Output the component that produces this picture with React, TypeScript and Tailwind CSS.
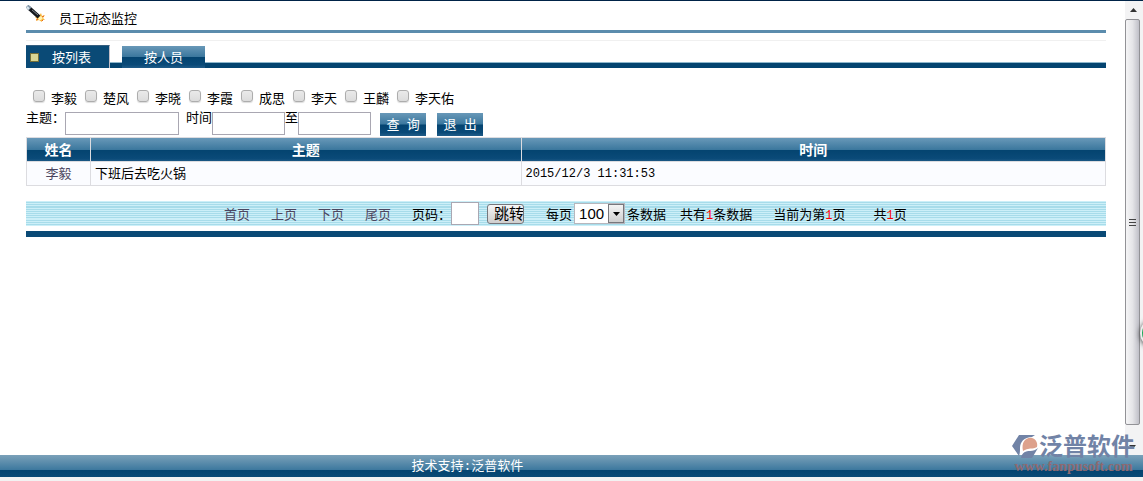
import type { ReactNode } from "react";

const people = ["李毅", "楚风", "李晓", "李霞", "成思", "李天", "王麟", "李天佑"];

const pageLinks = ["首页", "上页", "下页", "尾页"];

const rows = [{ name: "李毅", subject: "下班后去吃火锅", time: "2015/12/3 11:31:53" }];

const blueBar =
  "bg-[linear-gradient(180deg,#6898b8_0%,#3c789e_48%,#044470_52%,#0a4a78_85%,#205c88_100%)]";

function WandIcon() {
  return (
    <svg width="20" height="18" viewBox="0 0 20 18" aria-hidden="true">
      <path d="M9 12l4-1 2-3 1 3 3-1-2 3 2 2-3 0 0 2-3-2-3 1 1-2z" fill="#f9b63c" />
      <path d="M12 13l3-2 2 2-2 2-2 0z" fill="#fff3b0" />
      <path d="M16 12l2-1M10 15l2-1M16 15l1 1" stroke="#e8641f" strokeWidth="1" />
      <path d="M3 3l10 9" stroke="#15181d" strokeWidth="4" />
      <path d="M1 1l3 3" stroke="#8196a8" strokeWidth="4" />
      <path d="M1 2l2 2" stroke="#dbe7ef" strokeWidth="2" />
      <path d="M6 5l6 5" stroke="#7b828a" strokeWidth="1" />
    </svg>
  );
}

function FanpuLogo() {
  return (
    <svg width="27" height="26" viewBox="0 0 27 26" aria-hidden="true">
      <path d="M7 1h16l-3 2C12 3 8 8 8 14c0 3 0 5-1 8L0 12z" fill="#7183a6" />
      <path d="M11 17C9 8 14 3 20 4c4 1 6 5 5 9-3 2-6 1-9 2-2 0-3 1-5 2z" fill="#dda18c" />
      <path d="M9 24c1-6 5-7 9-7 3 0 6-1 8-3l-6 10z" fill="#7183a6" />
    </svg>
  );
}

function ActionButton({ children }: { children: ReactNode }) {
  return (
    <button type="button" className={`h-[23px] w-[46px] whitespace-pre text-center text-white ${blueBar}`}>
      {children}
    </button>
  );
}

function Count({ value }: { value: number }) {
  return (
    <span className="font-['Liberation_Mono',monospace] text-[12px] leading-none text-[#ff0000]">{value}</span>
  );
}

function Tabs() {
  return (
    <nav className="mt-1 flex h-[23px] items-end bg-[linear-gradient(180deg,transparent_17px,#8eb7cc_17px,#8eb7cc_18px,#044470_18px)] text-white">
      <button
        type="button"
        className="flex h-[23px] w-[84px] items-center border-t border-r border-t-[#365f80] border-r-[#c4bfc7] bg-[#0a4a76] pl-1"
      >
        <span className="h-[9px] w-[9px] border border-[#746f38] bg-[#d9d694]" />
        <span className="ml-[13px] pt-0.5">按列表</span>
      </button>
      <button type="button" className={`ml-3 h-[22px] w-[83px] pt-0.5 text-center ${blueBar}`}>
        按人员
      </button>
    </nav>
  );
}

function SearchForm() {
  const field = "h-[23px] border border-[#a9a7b2] bg-white px-1 outline-none";
  return (
    <form className="mt-[22px]">
      <div className="flex h-[22px] items-start pl-[7px]">
        {people.map((name) => (
          <label key={name} className="mr-2 flex items-start">
            <input
              type="checkbox"
              className="h-3 w-3 shrink-0 appearance-none rounded-[3px] border border-[#adadad] bg-linear-to-b from-[#eaeaea] to-[#dcdcdc] shadow-[0_1px_1px_#ddd]"
            />
            <span className="mt-px ml-1.5">{name}</span>
          </label>
        ))}
      </div>
      <div className="flex items-start">
        <label htmlFor="subject" className="w-[39px] whitespace-nowrap leading-3">
          主题：
        </label>
        <input id="subject" type="text" className={`${field} w-[114px]`} />
        <label htmlFor="from" className="ml-[7px] leading-3">
          时间
        </label>
        <input id="from" type="text" className={`${field} w-[73px]`} />
        <label htmlFor="to" className="leading-3">
          至
        </label>
        <input id="to" type="text" className={`${field} w-[73px]`} />
        <div className="mt-px ml-[9px] flex gap-[11px]">
          <ActionButton>{"查  询"}</ActionButton>
          <ActionButton>{"退  出"}</ActionButton>
        </div>
      </div>
    </form>
  );
}

function ActivityTable() {
  const cell = "border border-[#dcdce0] h-6";
  return (
    <table className="mt-px w-full table-fixed border-collapse">
      <colgroup>
        <col className="w-16" />
        <col className="w-[39.9%]" />
        <col />
      </colgroup>
      <thead>
        <tr className={`text-[14px] leading-4 font-bold text-white ${blueBar}`}>
          <th className={cell}>姓名</th>
          <th className={cell}>主题</th>
          <th className={cell}>时间</th>
        </tr>
      </thead>
      <tbody className="bg-[#fbfcff]">
        {rows.map((row) => (
          <tr key={row.time}>
            <td className={`${cell} text-center text-[#4b4660]`}>{row.name}</td>
            <td className={`${cell} pl-1`}>{row.subject}</td>
            <td className={`${cell} pl-1 font-['Liberation_Mono',monospace] text-[12px]`}>{row.time}</td>
          </tr>
        ))}
      </tbody>
    </table>
  );
}

function Pager() {
  return (
    <div className="mt-[15px] flex h-[25px] items-center whitespace-nowrap bg-[linear-gradient(180deg,#cceff8_1px,#a7dcea_1px_2px,#cceff8_2px_3px,#a7dcea_3px_4px,#cceff8_4px_5px,#a7dcea_5px_7px,#cceff8_7px_8px,#a7dcea_8px_9px,#cceff8_9px_10px,#a7dcea_10px_11px,#cceff8_11px_12px,#a7dcea_12px_13px,#cceff8_13px_14px,#a7dcea_14px_15px,#cceff8_15px_16px,#a7dcea_16px_17px,#cceff8_17px_19px,#a7dcea_19px_20px,#cceff8_20px_21px,#a7dcea_21px_22px,#cceff8_22px_23px,#a7dcea_23px_24px,#cceff8_24px)] pl-[198px]">
      <div className="flex gap-[21px] pt-0.5">
        {pageLinks.map((text) => (
          <a key={text} href="#" className="text-[#4b4660]">
            {text}
          </a>
        ))}
      </div>
      <label htmlFor="page" className="ml-[21px] w-[39px] pt-0.5">
        页码：
      </label>
      <input id="page" type="text" className="h-[23px] w-7 border border-[#a9a7b2] bg-white outline-none" />
      <button
        type="button"
        className="ml-2 h-5 w-[37px] overflow-hidden rounded-[3px] border border-[#77777c] bg-linear-to-b from-[#f6f6f6] to-[#cfcfcf] pl-1.5 text-[15px] leading-[18px]"
      >
        跳转
      </button>
      <label htmlFor="size" className="ml-[22px] pt-0.5">
        每页
      </label>
      <span className="relative ml-0.5 flex">
        <select
          id="size"
          defaultValue="100"
          className="h-[21px] w-[51px] appearance-none border border-[#b7b7bd] bg-white pl-1 font-['Liberation_Sans',sans-serif] text-[15px] leading-[19px] outline-none"
        >
          <option>100</option>
        </select>
        <span className="pointer-events-none absolute top-px right-px flex h-[19px] w-4 items-center justify-center border border-[#77777c] bg-linear-to-b from-[#f4f4f4] to-[#cfcfcf]">
          <svg width="7" height="4" viewBox="0 0 7 4" aria-hidden="true">
            <path d="M0 0h7L3.5 4z" />
          </svg>
        </span>
      </span>
      <div className="flex pt-0.5 pl-0.5">
        <span>条数据</span>
        <span className="ml-[14px]">
          共有
          <Count value={1} />
          条数据
        </span>
        <span className="ml-[21px]">
          当前为第
          <Count value={1} />页
        </span>
        <span className="ml-7">
          共<Count value={1} />页
        </span>
      </div>
    </div>
  );
}

function ScrollRail() {
  return (
    <div className="flex w-[18px] shrink-0 flex-col items-start bg-[#f3f3f4]" aria-hidden="true">
      <div className="flex h-[18px] w-4 items-center justify-center">
        <svg width="7" height="4" viewBox="0 0 7 4">
          <path d="M0 4h7L3.5 0z" fill="#333" />
        </svg>
      </div>
      <div className="flex w-[15px] flex-1 flex-col items-center justify-center gap-0.5 rounded-[2px] border border-[#929296] bg-linear-to-r from-[#f5f5f6] via-[#e5e5e8] to-[#c0c0c8]">
        <span className="h-px w-[7px] bg-[#444]" />
        <span className="h-px w-[7px] bg-[#444]" />
        <span className="h-px w-[7px] bg-[#444]" />
      </div>
      <div className="flex h-[30px] w-[15px] items-end justify-center pb-1.5">
        <svg width="7" height="4" viewBox="0 0 7 4">
          <path d="M0 0h7L3.5 4z" fill="#333" />
        </svg>
      </div>
    </div>
  );
}

export default function App() {
  return (
    <div className="relative flex min-h-screen flex-col overflow-hidden border-t border-[#002347] bg-white font-['Liberation_Sans','Noto_Sans_CJK_SC',sans-serif] text-[13px] leading-4 text-black">
      <div className="flex flex-1">
        <main className="min-w-0 flex-1 pr-[19px] pl-[26px]">
          <header className="flex h-8 items-start border-b-3 border-[#5b8cad] pt-1">
            <WandIcon />
            <h1 className="mt-1.5 ml-[13px]">员工动态监控</h1>
          </header>
          <div className="mt-[7px] h-px bg-[#f0f0f0]" />
          <Tabs />
          <SearchForm />
          <ActivityTable />
          <Pager />
          <div className="mt-[5px] h-1.5 bg-[#0a4a76]" />
        </main>
        <ScrollRail />
      </div>

      <footer className="border-b-4 border-[#f2f2f2]">
        <div className="h-[22px] bg-[linear-gradient(180deg,#7ba1b9_0%,#3c789e_68%,#044470_70%,#0a4a76_100%)] pl-[36%] leading-[22px] text-white">
          技术支持<span className="font-['Liberation_Mono',monospace] leading-none">:</span>泛普软件
        </div>
      </footer>

      {/* floating side button, mostly off the right edge */}
      <div className="absolute top-[317px] -right-[27px] h-[30px] w-[30px] rounded-full border-2 border-[#eee] bg-[#1da65a] shadow-[0_1px_5px_#444]" />

      <div className="absolute right-2 bottom-2 flex flex-col items-center whitespace-nowrap">
        <div className="flex items-center">
          <FanpuLogo />
          <span className="text-[24px] leading-7 font-bold text-[#7183a6]">泛普软件</span>
        </div>
        <span className="font-['Liberation_Serif',serif] text-[14px] leading-3 font-bold text-[#8d6970]">
          www.fanpusoft.com
        </span>
      </div>
    </div>
  );
}
